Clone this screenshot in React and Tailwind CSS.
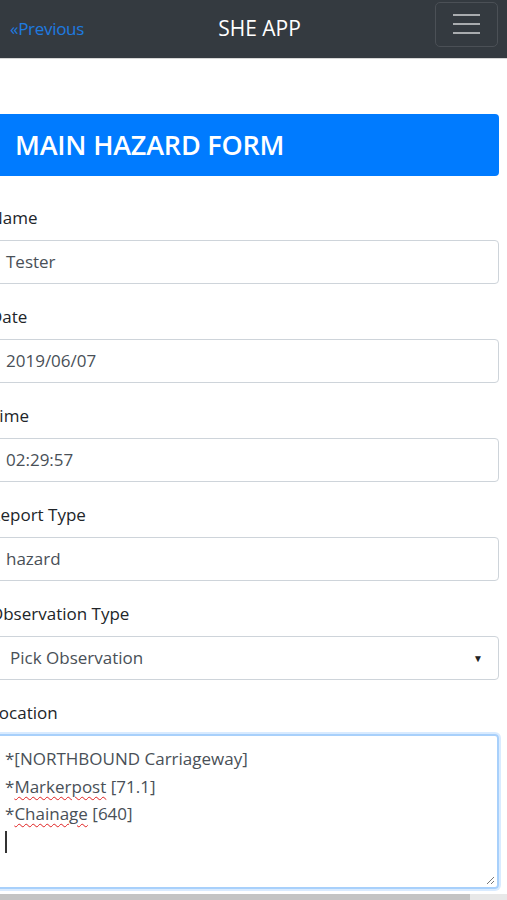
import React from 'react';

const fields = [
  { label: 'Name', value: 'Tester' },
  { label: 'Date', value: '2019/06/07' },
  { label: 'Time', value: '02:29:57' },
  { label: 'Report Type', value: 'hazard' },
];

export default function App() {
  return (
    <div className="relative w-[507px] h-[900px] overflow-hidden bg-white text-[#212529]" style={{ fontFamily: '"Open Sans", "Noto Sans", sans-serif' }}>
      {/* Navbar */}
      <div className="h-[59px] bg-[#343a40] border-b border-[#d6d6d6] flex items-center justify-between pl-[10px] pr-[9px]">
        <span className="text-[17px] text-[#1e7be0] tracking-[-0.3px]">«Previous</span>
        <span className="text-[21px] text-white">SHE APP</span>
        <button className="w-[63px] h-[45px] -mt-[10px] rounded-[5px] border border-[#4b5056] flex flex-col items-center justify-center gap-[7px]">
          <span className="block w-[27px] h-[2px] bg-[#a9acaf]" />
          <span className="block w-[27px] h-[2px] bg-[#a9acaf]" />
          <span className="block w-[27px] h-[2px] bg-[#a9acaf]" />
        </button>
      </div>

      <div className="ml-[-10px] w-[509px]">
        {/* Title */}
        <div className="mt-[55px] h-[62px] bg-[#007bff] rounded-[4px] flex items-center pl-[25px]">
          <h1 className="text-[27px] font-semibold text-white tracking-[-0.2px]">MAIN HAZARD FORM</h1>
        </div>

        <div className="pt-[29px]">
          {fields.map((f) => (
            <div key={f.label} className="mb-[20px]">
              <label className="block h-[25px] leading-[25px] text-[17px] mb-[10px]">{f.label}</label>
              <div className="h-[44px] border border-[#ced4da] rounded-[4px] flex items-center pl-[15px] text-[17px] text-[#495057]">
                {f.value}
              </div>
            </div>
          ))}

          <div className="mb-[20px]">
            <label className="block h-[25px] leading-[25px] text-[17px] mb-[10px]">Observation Type</label>
            <div className="h-[44px] border border-[#ced4da] rounded-[4px] flex items-center justify-between pl-[19px] pr-[15px] text-[17px] text-[#495057]">
              <span>Pick Observation</span>
              <span className="text-[10px] text-[#222]">▼</span>
            </div>
          </div>

          <div>
            <label className="block h-[25px] leading-[25px] text-[17px] mb-[9px]">Location</label>
            <div className="relative h-[155px] border-2 border-[#a8d0fb] rounded-[4px] shadow-[0_0_0_2px_rgba(0,123,255,0.15)] pl-[13px] pt-[9px] text-[17px] text-[#495057] leading-[27.5px]">
              <div>*[NORTHBOUND Carriageway]</div>
              <div>
                *<span className="underline decoration-wavy decoration-[#e02020] decoration-1 underline-offset-[3px]">Markerpost</span> [71.1]
              </div>
              <div>
                *<span className="underline decoration-wavy decoration-[#e02020] decoration-1 underline-offset-[3px]">Chainage</span> [640]
              </div>
              <div className="w-[1.5px] h-[22px] bg-[#333] mt-[3px]" />
              <svg className="absolute right-[2px] bottom-[2px]" width="10" height="10" viewBox="0 0 10 10">
                <path d="M9 2 L2 9 M9 6 L6 9" stroke="#777" strokeWidth="1" />
              </svg>
            </div>
          </div>
        </div>
      </div>

      {/* bottom scrollbar strip */}
      <div className="absolute left-0 bottom-0 w-full h-[6px] bg-[#e8e8e8]">
        <div className="w-[470px] h-full bg-[#c4c4c4]" />
      </div>
    </div>
  );
}
